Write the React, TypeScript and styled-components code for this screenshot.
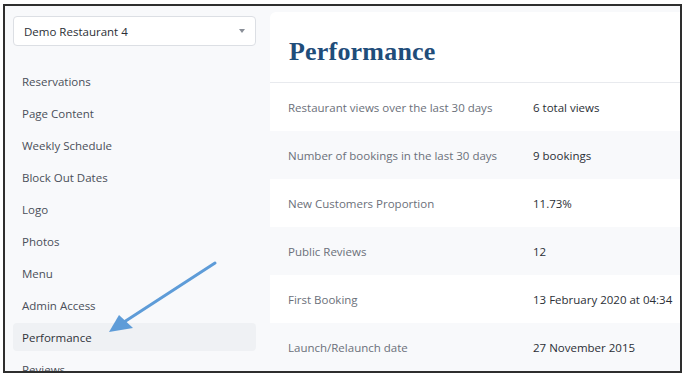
import { createGlobalStyle, styled } from "styled-components";

const GlobalStyle = createGlobalStyle`
  html, body {
    margin: 0;
    padding: 0;
    background: #ffffff;
  }
  body {
    font-family: "Open Sans", "Liberation Sans", sans-serif;
  }
`;

const navItems = [
  "Reservations",
  "Page Content",
  "Weekly Schedule",
  "Block Out Dates",
  "Logo",
  "Photos",
  "Menu",
  "Admin Access",
  "Performance",
  "Reviews",
];

const stats = [
  { label: "Restaurant views over the last 30 days", value: "6 total views" },
  { label: "Number of bookings in the last 30 days", value: "9 bookings" },
  { label: "New Customers Proportion", value: "11.73%" },
  { label: "Public Reviews", value: "12" },
  { label: "First Booking", value: "13 February 2020 at 04:34" },
  { label: "Launch/Relaunch date", value: "27 November 2015" },
];

const App = () => {
  return (
    <>
      <GlobalStyle />
      <Frame>
        <Layout>
          <Sidebar>
            <Select>
              <span>Demo Restaurant 4</span>
              <Caret />
            </Select>
            <Nav>
              {navItems.map((item) => (
                <NavItem key={item} $active={item === "Performance"}>
                  {item}
                </NavItem>
              ))}
            </Nav>
          </Sidebar>
          <Panel>
            <Header>
              <Title>Performance</Title>
            </Header>
            {stats.map((row, i) => (
              <Row key={row.label} $striped={i % 2 === 1}>
                <Label>{row.label}</Label>
                <Value>{row.value}</Value>
              </Row>
            ))}
          </Panel>
        </Layout>
        <Arrow viewBox="0 0 677 367">
          <line x1="210" y1="257" x2="116" y2="318" stroke="#5e9cd8" strokeWidth="3" strokeLinecap="round" />
          <polygon points="104,326 114,309 128,322" fill="#5e9cd8" />
        </Arrow>
      </Frame>
    </>
  );
};

export default App;

const Frame = styled.div`
  position: relative;
  box-sizing: border-box;
  margin: 4px 0 0 3px;
  width: 679px;
  height: 369px;
  border: 2px solid #2e2e2e;
  overflow: hidden;
  background: #f8f9fb;
`;

const Layout = styled.div`
  display: flex;
  height: 100%;
`;

const Sidebar = styled.div`
  flex: 0 0 265px;
  box-sizing: border-box;
  padding: 10px 0 0 8px;
  display: flex;
  flex-direction: column;
`;

const Select = styled.div`
  flex-shrink: 0;
  box-sizing: border-box;
  width: 243px;
  height: 30px;
  display: flex;
  align-items: center;
  justify-content: space-between;
  padding: 0 10px 0 10px;
  background: #ffffff;
  border: 1px solid #dcdfe4;
  border-radius: 4px;
  font-size: 11.5px;
  color: #2b2f36;
`;

const Caret = styled.span`
  width: 0;
  height: 0;
  border-left: 3.5px solid transparent;
  border-right: 3.5px solid transparent;
  border-top: 4px solid #8a8f98;
`;

const Nav = styled.div`
  flex-shrink: 0;
  margin-top: 21px;
  display: flex;
  flex-direction: column;
  gap: 4px;
`;

const NavItem = styled.div<{ $active?: boolean }>`
  flex-shrink: 0;
  box-sizing: border-box;
  width: 243px;
  height: 28px;
  display: flex;
  align-items: center;
  padding-left: 9px;
  border-radius: 4px;
  font-size: 11.5px;
  color: ${(p) => (p.$active ? "#2f333a" : "#4a4f59")};
  background: ${(p) => (p.$active ? "#eff1f4" : "transparent")};
`;

const Panel = styled.div`
  flex: 1;
  margin-top: 6px;
  background: #ffffff;
  border-top-left-radius: 6px;
  display: flex;
  flex-direction: column;
`;

const Header = styled.div`
  flex-shrink: 0;
  height: 71px;
  box-sizing: border-box;
  border-bottom: 1px solid #e8eaee;
  display: flex;
  align-items: center;
  padding: 10px 0 0 19px;
`;

const Title = styled.h1`
  margin: 0;
  font-family: "Liberation Serif", "DejaVu Serif", serif;
  font-weight: 700;
  font-size: 26px;
  color: #1f4d7a;
  letter-spacing: 0.2px;
`;

const Row = styled.div<{ $striped?: boolean }>`
  flex: 0 0 48px;
  display: flex;
  align-items: center;
  padding-left: 18px;
  background: ${(p) => (p.$striped ? "#f8f9fb" : "#ffffff")};
  font-size: 11.5px;
`;

const Label = styled.div`
  width: 245px;
  color: #6b707a;
  white-space: nowrap;
`;

const Value = styled.div`
  color: #2b2f36;
  white-space: nowrap;
`;

const Arrow = styled.svg`
  position: absolute;
  left: 0;
  top: 0;
  width: 677px;
  height: 367px;
  pointer-events: none;
`;
